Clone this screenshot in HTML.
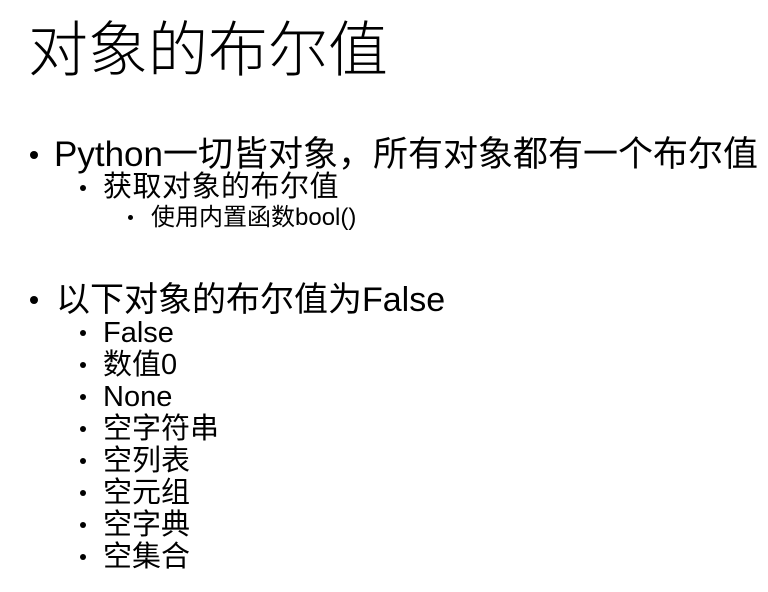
<!DOCTYPE html>
<html><head><meta charset="utf-8"><style>
body{margin:0;width:768px;height:592px;background:#fff;overflow:hidden;font-family:"Liberation Sans","Noto Sans CJK SC",sans-serif;color:#000;position:relative}
.t{position:absolute;white-space:nowrap;line-height:1}
.b{position:absolute;border-radius:50%;background:#000}
</style></head><body>
<div class="t" style="left:28px;top:21px;font-size:60px;font-weight:300">对象的布尔值</div>

<div class="b" style="left:30px;top:151px;width:8px;height:8px"></div>
<div class="t" style="left:54px;top:137px;font-size:35px">Python一切皆对象，所有对象都有一个布尔值</div>

<div class="b" style="left:80px;top:185px;width:6px;height:6px"></div>
<div class="t" style="left:103px;top:173px;font-size:29px;letter-spacing:0.5px">获取对象的布尔值</div>

<div class="b" style="left:128px;top:215px;width:5px;height:5px"></div>
<div class="t" style="left:151px;top:206px;font-size:24px">使用内置函数bool()</div>

<div class="b" style="left:30px;top:296px;width:8px;height:8px"></div>
<div class="t" style="left:56px;top:283px;font-size:34px">以下对象的布尔值为False</div>

<div class="b" style="left:80px;top:330px;width:6px;height:6px"></div>
<div class="t" style="left:103px;top:319px;font-size:29px">False</div>
<div class="b" style="left:80px;top:362px;width:6px;height:6px"></div>
<div class="t" style="left:103px;top:351px;font-size:29px">数值0</div>
<div class="b" style="left:80px;top:394px;width:6px;height:6px"></div>
<div class="t" style="left:103px;top:383px;font-size:29px">None</div>
<div class="b" style="left:80px;top:426px;width:6px;height:6px"></div>
<div class="t" style="left:103px;top:415px;font-size:29px">空字符串</div>
<div class="b" style="left:80px;top:458px;width:6px;height:6px"></div>
<div class="t" style="left:103px;top:447px;font-size:29px">空列表</div>
<div class="b" style="left:80px;top:490px;width:6px;height:6px"></div>
<div class="t" style="left:103px;top:479px;font-size:29px">空元组</div>
<div class="b" style="left:80px;top:522px;width:6px;height:6px"></div>
<div class="t" style="left:103px;top:511px;font-size:29px">空字典</div>
<div class="b" style="left:80px;top:554px;width:6px;height:6px"></div>
<div class="t" style="left:103px;top:543px;font-size:29px">空集合</div>
</body></html>
